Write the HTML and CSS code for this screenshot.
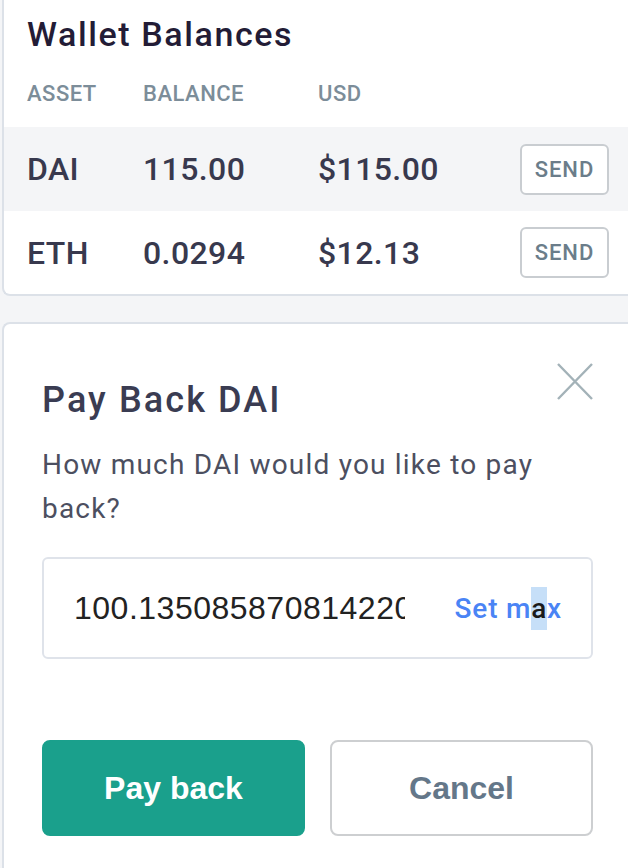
FILE: index.html
```html
<!DOCTYPE html>
<html lang="en">
<head>
<meta charset="utf-8">
<title>Pay Back DAI</title>
<link rel="stylesheet" href="styles.css">
</head>
<body>
<main class="page">
  <section class="card wallet">
    <h2 class="wallet-title">Wallet Balances</h2>
    <div class="grid head">
      <span>Asset</span><span>Balance</span><span>USD</span><span></span>
    </div>
    <div class="grid row alt">
      <span>DAI</span><span>115.00</span><span>$115.00</span><button class="send">SEND</button>
    </div>
    <div class="grid row last">
      <span>ETH</span><span>0.0294</span><span>$12.13</span><button class="send">SEND</button>
    </div>
  </section>

  <section class="card modal">
    <div class="modal-head">
      <h2 class="modal-title">Pay Back DAI</h2>
      <button class="close" aria-label="Close">
        <svg width="36" height="37" viewBox="0 0 36 37"><path d="M1 1 L35 36 M35 1 L1 36" stroke="#a3b2b8" stroke-width="2.4" fill="none"/></svg>
      </button>
    </div>
    <p class="question">How much DAI would you like to pay back?</p>
    <div class="field">
      <input class="amount" type="text" value="100.13508587081422024">
      <span class="setmax">Set m<span class="sel">a</span>x</span>
    </div>
    <div class="actions">
      <button class="btn primary">Pay back</button>
      <button class="btn secondary">Cancel</button>
    </div>
  </section>
</main>
</body>
</html>
```
FILE: styles.css
```css
* { box-sizing: border-box; }

html, body {
  margin: 0;
  padding: 0;
}

body {
  background: #f4f5f7;
  font-family: Roboto, "Liberation Sans", Arial, sans-serif;
  overflow: hidden;
  height: 868px;
}

.page {
  display: flex;
  flex-direction: column;
  gap: 26px;
}

.card {
  margin-left: 2px;
  background: #ffffff;
  border: 2px solid #dce1e8;
  border-right: none;
}

.wallet {
  border-top: none;
  border-bottom-left-radius: 8px;
}

.wallet-title {
  margin: 0;
  padding: 15px 0 0 23px;
  font-size: 34px;
  line-height: 39px;
  font-weight: 500;
  color: #231c36;
  letter-spacing: 1.6px;
}

.grid {
  display: grid;
  grid-template-columns: 116px 175px 1fr 89px;
  align-items: center;
  padding: 0 19px 0 23px;
}

.head {
  padding-top: 27px;
  padding-bottom: 20px;
  line-height: 26px;
  font-size: 22px;
  font-weight: 500;
  color: #7c8d99;
  text-transform: uppercase;
  letter-spacing: 0.5px;
}

.row {
  height: 84px;
  font-size: 32px;
  font-weight: 500;
  color: #38394e;
  letter-spacing: 0.4px;
}

.row.last { height: 83px; }

.alt { background: #f4f5f7; }

.send {
  width: 89px;
  height: 51px;
  padding: 0;
  border: 2px solid #c9cdd1;
  border-radius: 6px;
  background: #ffffff;
  font-family: Roboto, sans-serif;
  font-size: 22px;
  font-weight: 500;
  letter-spacing: 1px;
  color: #6b7d8a;
}

.modal {
  flex: 1;
  border-bottom: none;
  border-top-left-radius: 8px;
  padding: 39px 35px 0 38px;
  min-height: 560px;
}

.modal-head {
  display: flex;
  justify-content: space-between;
  align-items: flex-start;
}

.modal-title {
  margin: 16px 0 0 0;
  font-size: 36px;
  line-height: 42px;
  font-weight: 500;
  color: #3a3c52;
  letter-spacing: 2.1px;
}

.close {
  padding: 0;
  border: none;
  background: none;
  width: 36px;
  height: 37px;
  display: block;
}

.close svg { display: block; }

.question {
  margin: 22px 0 0 0;
  font-size: 28px;
  line-height: 44px;
  color: #4c4f60;
  letter-spacing: 1.2px;
}

.field {
  margin-top: 26px;
  height: 102px;
  display: flex;
  align-items: center;
  gap: 50px;
  padding: 0 29px 0 30px;
  border: 2px solid #dfe3ea;
  border-radius: 6px;
}

.amount {
  flex: 1;
  min-width: 0;
  border: none;
  outline: none;
  padding: 0;
  background: transparent;
  font-family: "Liberation Sans", Arial, sans-serif;
  font-size: 32px;
  color: #222222;
  letter-spacing: 0.5px;
}

.setmax {
  font-size: 28px;
  font-weight: 500;
  color: #4a84f5;
  letter-spacing: 0.8px;
  white-space: nowrap;
}

.sel {
  display: inline-block;
  background: #c6dff8;
  color: #1b1b1b;
  line-height: 43px;
}

.actions {
  margin-top: 81px;
  display: flex;
  gap: 25px;
}

.btn {
  flex: 1;
  height: 96px;
  border-radius: 8px;
  font-family: "Liberation Sans", Arial, sans-serif;
  font-size: 32px;
  font-weight: 700;
}

.primary {
  background: #1aa08c;
  border: 2px solid #1aa08c;
  color: #ffffff;
}

.secondary {
  background: #ffffff;
  border: 2px solid #cdcfd1;
  color: #647789;
}
```
